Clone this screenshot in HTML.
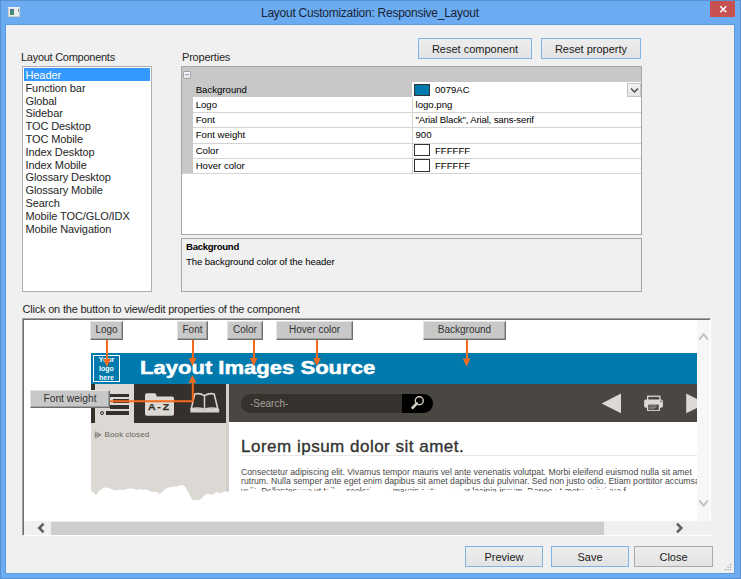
<!DOCTYPE html>
<html><head><meta charset="utf-8">
<style>
*{box-sizing:border-box;margin:0;padding:0}
html,body{width:741px;height:579px;overflow:hidden;background:#6aabf2}
body{position:relative;font-family:"Liberation Sans",sans-serif;color:#000}
.a{position:absolute}
.t{position:absolute;white-space:nowrap;line-height:1}
#frame{left:0;top:0;width:741px;height:579px;border:1px solid #5a8fd0;background:#6aabf2}
#content{left:5px;top:24px;width:730px;height:550px;background:#f0f0f0;border:1px solid #5c9ae0}
.btn{position:absolute;border:1px solid #7eb4ea;background:linear-gradient(#ededed,#e3e3e3);font-size:11px;line-height:19px;padding-top:1px;text-align:center;color:#1a1a1a}
.btn.g{border-color:#acacac}
.list .t{font-size:11px;color:#262626;letter-spacing:-0.1px}
.pg{font-size:9.6px;color:#000}
.pbtn{position:absolute;background:#c8c8c8;border:1px solid;border-color:#e4e4e4 #6e6e6e #6e6e6e #e4e4e4;font-size:10px;line-height:16px;text-align:center;color:#333;box-shadow:inset -1px -1px 0 #a0a0a0}
.or{position:absolute;background:#f36a1c}
</style></head><body>
<div id="frame" class="a"></div>
<!-- title icon -->
<div class="a" style="left:8px;top:7px;width:12px;height:10px;background:#ececec;border:1px solid #d0ccc6;border-top:1.5px solid #f4f4f4"></div>
<div class="a" style="left:9.7px;top:9px;width:4.3px;height:5.8px;background:linear-gradient(160deg,#4d6ea6,#3f9a5c)"></div><div class="a" style="left:17.5px;top:9px;width:1.5px;height:3px;background:linear-gradient(#5b86c0,#6ac070)"></div>
<div class="t" style="left:261px;top:6.5px;font-size:12px;letter-spacing:-0.25px;color:#1b2433">Layout Customization: Responsive_Layout</div>
<!-- close -->
<div class="a" style="left:710px;top:1px;width:25px;height:16px;background:#c75050"></div>
<svg class="a" style="left:718px;top:4px" width="10" height="10" viewBox="0 0 10 10"><path d="M2.2 2.2L8.3 8.2M8.3 2.2L2.2 8.2" stroke="#fff" stroke-width="1.5"/></svg>

<div id="content" class="a"></div>

<div class="t" style="left:21px;top:51.8px;font-size:11px;letter-spacing:-0.27px;color:#262626">Layout Components</div>
<div class="t" style="left:182px;top:51.8px;font-size:11px;letter-spacing:-0.2px;color:#262626">Properties</div>

<div class="btn" style="left:418px;top:38px;width:114px;height:21px">Reset component</div>
<div class="btn" style="left:541px;top:38px;width:100px;height:21px">Reset property</div>

<!-- listbox -->
<div class="a list" style="left:22px;top:66px;width:130px;height:226px;background:#fff;border:1px solid #abadb3">
 <div class="a" style="left:1px;top:1px;width:126px;height:13px;background:#3399ff"></div>
</div>
<div class="list">
<div class="t" style="left:25.5px;top:69.9px;color:#fff">Header</div>
<div class="t" style="left:25.5px;top:82.7px">Function bar</div>
<div class="t" style="left:25.5px;top:95.5px">Global</div>
<div class="t" style="left:25.5px;top:108.3px">Sidebar</div>
<div class="t" style="left:25.5px;top:121.1px">TOC Desktop</div>
<div class="t" style="left:25.5px;top:133.9px">TOC Mobile</div>
<div class="t" style="left:25.5px;top:146.7px">Index Desktop</div>
<div class="t" style="left:25.5px;top:159.5px">Index Mobile</div>
<div class="t" style="left:25.5px;top:172.3px">Glossary Desktop</div>
<div class="t" style="left:25.5px;top:185.1px">Glossary Mobile</div>
<div class="t" style="left:25.5px;top:197.9px">Search</div>
<div class="t" style="left:25.5px;top:210.7px">Mobile TOC/GLO/IDX</div>
<div class="t" style="left:25.5px;top:223.5px">Mobile Navigation</div>
</div>

<!-- property grid -->
<div class="a" style="left:181px;top:66px;width:461px;height:169px;background:#fff;border:1px solid #a4a8ac;border-top:1.5px solid #a4a8ac"></div>
<div class="a" style="left:182px;top:67px;width:459px;height:15px;background:#c8c8c8"></div>
<div class="a" style="left:182px;top:82px;width:11px;height:91.5px;background:#c8c8c8"></div>
<div class="a" style="left:193px;top:82px;width:219px;height:15px;background:#c8c8c8"></div>
<div class="a" style="left:183px;top:71px;width:8px;height:8px;border:1px solid #a0a0a0;background:linear-gradient(#fafafa,#e4e4e4);border-radius:1.5px"></div>
<div class="a" style="left:184.8px;top:74px;width:4.4px;height:1.2px;background:#8797d0"></div>
<!-- row lines -->
<div class="a" style="left:193px;top:112px;width:448px;height:1px;background:#d4d4d4"></div>
<div class="a" style="left:193px;top:127px;width:448px;height:1px;background:#d4d4d4"></div>
<div class="a" style="left:193px;top:142.5px;width:448px;height:1px;background:#d4d4d4"></div>
<div class="a" style="left:193px;top:157.7px;width:448px;height:1px;background:#d4d4d4"></div>
<div class="a" style="left:182px;top:173px;width:459px;height:1px;background:#d4d4d4"></div>
<div class="a" style="left:412px;top:97px;width:1px;height:76px;background:#d4d4d4"></div>
<!-- dropdown -->
<div class="a" style="left:627px;top:82.5px;width:14px;height:14.5px;border:1px solid #c4c4c4;background:linear-gradient(#f2f2f2,#e4e4e4)"></div>
<svg class="a" style="left:629.5px;top:86.5px" width="9" height="7" viewBox="0 0 9 7"><path d="M1 1.5L4.5 5L8 1.5" stroke="#444" stroke-width="1.3" fill="none"/></svg>
<div class="a" style="left:414px;top:84px;width:16px;height:12px;background:#0079ac;border:1px solid #333"></div>
<div class="a" style="left:414px;top:144px;width:16px;height:12px;background:#fff;border:1px solid #333"></div>
<div class="a" style="left:414px;top:159px;width:16px;height:13px;background:#fff;border:1px solid #333"></div>
<div class="pg">
<div class="t" style="left:195.7px;top:84.8px">Background</div>
<div class="t" style="left:195.7px;top:99.8px">Logo</div>
<div class="t" style="left:195.7px;top:114.8px">Font</div>
<div class="t" style="left:195.7px;top:130.3px">Font weight</div>
<div class="t" style="left:195.7px;top:145.5px">Color</div>
<div class="t" style="left:195.7px;top:160.7px">Hover color</div>
<div class="t" style="left:435px;top:84.8px">0079AC</div>
<div class="t" style="left:415.5px;top:99.8px">logo.png</div>
<div class="t" style="left:415.5px;top:114.8px;letter-spacing:-0.15px">"Arial Black", Arial, sans-serif</div>
<div class="t" style="left:415.5px;top:130.3px">900</div>
<div class="t" style="left:435px;top:145.5px">FFFFFF</div>
<div class="t" style="left:435px;top:160.7px">FFFFFF</div>
</div>
<!-- description -->
<div class="a" style="left:181px;top:238px;width:461px;height:54px;border:1px solid #a4a8ac;border-top:1.5px solid #a4a8ac;background:#f0f0f0"></div>
<div class="t pg" style="left:186px;top:242px;font-weight:bold;letter-spacing:-0.3px">Background</div>
<div class="t pg" style="left:186px;top:256.8px;letter-spacing:-0.1px">The background color of the header</div>

<div class="t" style="left:22.5px;top:303.5px;font-size:11px;letter-spacing:-0.2px;color:#262626">Click on the button to view/edit properties of the component</div>

<!-- preview panel -->
<div class="a" style="left:22px;top:318px;width:689px;height:218px;background:#fff;border-style:solid;border-width:1px;border-color:#a0a0a0 #fff #fff #a0a0a0;box-shadow:inset 1px 1px 0 #6d6d6d"></div>

<!-- preview content -->
<div class="a" style="left:0;top:0;width:741px;height:579px;clip-path:inset(320px 44px 58px 24px)">
 <div class="a" style="left:91px;top:353px;width:606px;height:31px;background:#0079ac"></div>
 <!-- toolbar -->
 <div class="a" style="left:91px;top:384px;width:4px;height:38.5px;background:#34312d"></div>
 <div class="a" style="left:95px;top:384px;width:134px;height:116px;background:#dcd8d3"></div>
 <div class="a" style="left:133.6px;top:384px;width:92px;height:38.5px;background:#34312d"></div>
 <div class="a" style="left:225.6px;top:384px;width:3.4px;height:116px;background:#d3cec9"></div>
 <div class="a" style="left:229px;top:384px;width:468px;height:38px;background:#4a4641"></div>
 <div class="a" style="left:91px;top:422.5px;width:4px;height:78px;background:#dcd8d3"></div>

 <!-- logo box -->
 <div class="a" style="left:93px;top:355px;width:27px;height:27px;border:1px solid #fff"></div>
 <div class="a" style="left:93px;top:355px;width:27px;text-align:center;color:#fff;font-weight:bold;font-size:7px;line-height:9px;padding-top:0px">Your<br>logo<br>here</div>
 <div class="t" style="left:140px;top:358px;font-size:19px;font-weight:bold;color:#fff;transform:scaleX(1.16);transform-origin:0 0;-webkit-text-stroke:0.5px #fff">Layout Images Source</div>
 <!-- hamburger icon -->
 <div class="a" style="left:110px;top:393.7px;width:18.6px;height:3.4px;background:#34312d"></div>
 <div class="a" style="left:113px;top:399.2px;width:15.6px;height:3.4px;background:#34312d"></div>
 <div class="a" style="left:110px;top:405.4px;width:18.6px;height:3.4px;background:#34312d"></div>
 <div class="a" style="left:106.4px;top:411px;width:22.2px;height:3.6px;background:#34312d"></div>
 <div class="a" style="left:99.6px;top:411px;width:4px;height:4px;border:1.2px solid #34312d;border-radius:50%"></div>
 <!-- A-Z folder -->
 <svg class="a" style="left:144px;top:392px" width="31" height="25" viewBox="0 0 31 25">
  <path d="M1 3.5Q1 1.3 3 1.3H10.5Q12 1.3 12.5 3V4.4H28Q30 4.4 30 6.4V22Q30 23.8 28 23.8H3Q1 23.8 1 22Z" fill="#dcd8d3"/>
 </svg>
 <div class="t" style="left:148.3px;top:402.3px;font-size:9.4px;font-weight:bold;color:#34312d;letter-spacing:1.6px;transform:scaleX(1.12);transform-origin:0 0;-webkit-text-stroke:0.25px #34312d">A-Z</div>
 <!-- book -->
 <svg class="a" style="left:189px;top:392px" width="32" height="22" viewBox="0 0 32 22">
  <path d="M15.5 3.6Q10.5 0.6 5.8 2.1L2.2 16.8Q9 15 15.5 17.3Q22 15 28.8 16.8L25.2 2.1Q20.5 0.6 15.5 3.6Z" fill="none" stroke="#d6d1cc" stroke-width="1.6"/>
  <path d="M15.5 3.6V17" stroke="#d6d1cc" stroke-width="1.5"/>
  <path d="M1.4 17Q9 15.6 15.5 17.8Q22 15.6 30.2 17V20.4H1.4Z" fill="#d6d1cc"/>
 </svg>
 <!-- search -->
 <div class="a" style="left:241px;top:393.6px;width:191.5px;height:19.4px;background:#35322e;border-radius:9.7px;overflow:hidden">
  <div class="a" style="left:161px;top:0;width:31px;height:20px;background:#000"></div>
 </div>
 <div class="t" style="left:250px;top:398.5px;font-size:10px;color:#a8a39e">-Search-</div>
 <svg class="a" style="left:408px;top:394px" width="20" height="18" viewBox="0 0 20 18">
  <circle cx="11.3" cy="6.8" r="4" fill="none" stroke="#d0cac4" stroke-width="1.4"/>
  <path d="M8.6 9.6L4.6 13.8" stroke="#d0cac4" stroke-width="2.8" stroke-linecap="round"/>
 </svg>
 <!-- nav -->
 <svg class="a" style="left:600px;top:392px" width="100" height="24" viewBox="0 0 100 24">
  <path d="M1.6 11.6L21 1.6V21.2Z" fill="#dcd8d3"/>
  <path d="M86.2 1.6L106 11.6L86.2 21.2Z" fill="#dcd8d3"/>
  <rect x="47.65" y="4.25" width="12.2" height="5" fill="none" stroke="#dcd8d3" stroke-width="1.3"/>
  <rect x="44.1" y="7.6" width="18.8" height="8.1" rx="1.6" fill="#dcd8d3"/>
  <circle cx="61" cy="9.4" r="0.8" fill="#6a6560"/>
  <rect x="47" y="11.9" width="13" height="7" fill="#dcd8d3"/>
  <rect x="48.3" y="12.6" width="10.4" height="5.4" fill="#4a4641"/>
  <rect x="49.5" y="13.4" width="7" height="0.9" fill="#9a958f"/><rect x="49.5" y="14.9" width="7" height="0.9" fill="#9a958f"/><rect x="49.5" y="16.4" width="5" height="0.9" fill="#9a958f"/>
 </svg>
 <!-- book closed -->
 <svg class="a" style="left:94px;top:430px" width="9" height="10" viewBox="0 0 9 10">
  <path d="M0.8 0.8L7.8 4.9L0.8 9Z" fill="#8a8580"/><path d="M0.8 0.8L4 4.9L0.8 9" fill="none" stroke="#dcd8d3" stroke-width="0.8"/>
 </svg>
 <div class="t" style="left:104.6px;top:430.8px;font-size:8.1px;color:#68635e;letter-spacing:0.05px">Book closed</div>
 <!-- content -->
 <div class="t" style="left:241px;top:437.5px;font-size:17px;color:#333;letter-spacing:0.5px;-webkit-text-stroke:0.35px #333">Lorem ipsum dolor sit amet.</div>
 <div class="a" style="left:241px;top:455px;width:456px;height:1px;background:#e6e6e6"></div>
 <div class="a" style="left:241px;top:467.5px;width:460px;font-size:8.7px;line-height:9.5px;color:#4a4a4a;white-space:nowrap">Consectetur adipiscing elit. Vivamus tempor mauris vel ante venenatis volutpat. Morbi eleifend euismod nulla sit amet<br>rutrum. Nulla semper ante eget enim dapibus sit amet dapibus dui pulvinar. Sed non justo odio. Etiam porttitor accumsan<br>velit. Pellentesque ut tellus scelerisque mauris ante, tempor lacinia ipsum. Donec ut metus tristique f</div>
 <!-- torn edge -->
 <svg class="a" style="left:88px;top:480px" width="612" height="45" viewBox="88 480 612 45">
  <path d="M88.0 490.2 L91.0 490.2 L93.5 492.4 L96.0 495.3 L100.0 490.0 L104.2 487.8 L107.1 487.4 L110.0 488.5 L113.0 489.8 L116.0 490.5 L119.2 489.4 L122.4 490.2 L125.2 489.5 L128.0 488.7 L131.5 488.6 L134.8 489.0 L138.0 490.0 L140.2 489.0 L142.5 489.9 L144.7 489.8 L147.1 489.5 L149.6 491.1 L152.0 492.0 L154.6 491.7 L157.3 492.4 L159.9 493.9 L164.0 490.0 L168.0 487.8 L171.0 487.0 L174.0 486.5 L177.1 486.6 L180.1 485.2 L182.6 485.0 L185.0 486.5 L187.2 490.2 L189.8 494.7 L192.3 500.4 L195.0 500.3 L197.6 500.7 L200.3 499.4 L202.9 497.0 L205.4 494.3 L207.7 493.9 L210.0 494.0 L212.2 494.7 L214.5 493.3 L217.0 492.0 L219.5 493.6 L222.0 492.5 L224.2 491.8 L226.5 491.3 L228.7 491.9 L231.1 491.1 L233.6 491.5 L236.0 492.0 L239.0 491.9 L242.0 490.5 L246.0 491.0 L249.0 489.0 L252.0 488.5 L255.0 488.9 L258.0 489.0 L260.5 490.6 L263.0 491.5 L265.4 491.1 L267.8 491.4 L270.2 490.2 L272.6 490.1 L275.0 491.0 L277.5 490.1 L280.0 490.9 L282.5 490.1 L285.0 490.0 L287.3 490.1 L289.7 491.2 L292.0 491.5 L294.7 490.6 L297.3 489.4 L300.0 489.0 L302.7 489.8 L305.3 489.8 L308.0 489.5 L312.0 491.5 L314.5 490.7 L317.0 491.2 L319.5 490.8 L322.0 490.5 L324.7 490.7 L327.3 489.7 L330.0 488.5 L332.5 487.9 L335.0 489.3 L337.5 487.3 L340.0 488.0 L343.0 489.1 L346.0 490.5 L348.2 491.3 L350.5 490.2 L352.8 491.2 L355.0 491.5 L357.2 490.2 L359.4 491.3 L361.6 491.2 L363.8 490.5 L366.0 490.0 L368.7 489.8 L371.3 487.6 L374.0 487.0 L377.0 486.4 L380.0 485.0 L383.0 485.7 L386.0 486.0 L390.0 490.0 L392.5 490.4 L395.0 490.4 L397.5 491.5 L400.0 491.0 L402.5 491.9 L405.0 490.8 L407.5 491.1 L410.0 489.7 L412.5 491.0 L415.0 490.5 L417.5 490.4 L420.0 490.8 L422.5 490.1 L425.0 489.0 L427.3 488.9 L429.7 489.4 L432.0 490.0 L434.7 489.7 L437.3 487.6 L440.0 488.0 L442.4 488.0 L444.8 487.5 L447.2 487.5 L449.6 487.4 L452.0 488.5 L454.5 489.2 L457.0 487.9 L459.5 488.3 L462.0 489.0 L464.7 489.4 L467.3 491.2 L470.0 491.0 L472.5 490.0 L475.0 490.6 L477.5 490.7 L480.0 490.5 L482.5 491.5 L485.0 491.5 L487.5 491.8 L490.0 490.7 L492.5 491.1 L495.0 491.5 L497.5 490.9 L500.0 491.8 L502.5 491.8 L505.0 489.7 L507.5 489.5 L510.0 490.0 L512.5 489.7 L515.0 489.9 L517.5 490.7 L520.0 491.0 L522.5 491.0 L525.0 490.1 L527.5 489.4 L530.0 490.2 L532.5 489.9 L535.0 490.0 L537.6 490.4 L540.2 491.6 L542.8 491.3 L545.4 491.2 L548.0 491.5 L550.7 491.1 L553.3 490.6 L556.0 489.5 L558.5 488.6 L561.0 490.6 L563.5 490.5 L566.0 490.0 L568.4 491.0 L570.8 491.1 L573.2 490.4 L575.6 490.6 L578.0 491.0 L580.4 489.7 L582.8 490.5 L585.2 488.8 L587.6 488.4 L590.0 489.0 L592.7 488.7 L595.3 488.9 L598.0 490.0 L601.0 488.9 L604.0 488.5 L606.7 488.3 L609.3 489.1 L612.0 491.0 L614.6 490.3 L617.2 490.3 L619.8 491.0 L622.4 490.4 L625.0 491.5 L627.5 492.1 L630.0 491.3 L632.5 490.0 L635.0 490.0 L637.5 489.9 L640.0 490.0 L642.7 489.2 L645.3 488.2 L648.0 488.5 L650.3 489.6 L652.7 490.3 L655.0 489.5 L657.2 489.7 L659.5 490.0 L661.8 489.3 L664.0 490.5 L666.7 489.1 L669.3 489.2 L672.0 489.0 L674.7 488.1 L677.3 489.1 L680.0 488.0 L682.5 487.8 L685.0 488.0 L687.5 490.5 L690.0 490.0 L692.5 490.3 L695.0 489.7 L697.5 490.8 L700.0 491.0 V525 H88Z" fill="#fff"/>
 </svg>
</div>
<!-- scrollbars -->
<div class="a" style="left:696.5px;top:320px;width:13.5px;height:201px;background:#f7f7f7"></div>
<svg class="a" style="left:697px;top:330px" width="14" height="14" viewBox="0 0 14 14"><path d="M2.3 9.6L6.6 4.2L10.9 9.6" fill="none" stroke="#c4c4c4" stroke-width="2"/></svg>
<svg class="a" style="left:697px;top:496px" width="14" height="14" viewBox="0 0 14 14"><path d="M2.3 4.3L6.6 9.7L10.9 4.3" fill="none" stroke="#c4c4c4" stroke-width="2"/></svg>
<div class="a" style="left:24px;top:521px;width:687px;height:14px;background:#f0f0f0"></div>
<div class="a" style="left:51px;top:521.5px;width:553px;height:13px;background:#cdcdcd"></div>
<svg class="a" style="left:34px;top:521px" width="14" height="14" viewBox="0 0 14 14"><path d="M9.6 2.6L5.3 7L9.6 11.4" fill="none" stroke="#606060" stroke-width="2.6"/></svg>
<svg class="a" style="left:672px;top:521px" width="14" height="14" viewBox="0 0 14 14"><path d="M5 2.6L9.3 7L5 11.4" fill="none" stroke="#606060" stroke-width="2.6"/></svg>
<!-- preview buttons -->
<div class="pbtn" style="left:90px;top:321px;width:33px;height:19px">Logo</div>
<div class="pbtn" style="left:177px;top:321px;width:31px;height:19px">Font</div>
<div class="pbtn" style="left:227px;top:321px;width:36px;height:19px">Color</div>
<div class="pbtn" style="left:276px;top:321px;width:77px;height:19px">Hover color</div>
<div class="pbtn" style="left:423px;top:321px;width:83px;height:19px">Background</div>
<!-- arrows -->
<div class="or" style="left:106px;top:340px;width:2px;height:20px"></div>
<div class="or" style="left:191.5px;top:340px;width:2px;height:20px"></div>
<div class="or" style="left:252.7px;top:340px;width:2px;height:20px"></div>
<div class="or" style="left:316px;top:340px;width:2px;height:20px"></div>
<div class="or" style="left:465.6px;top:340px;width:2px;height:20px"></div>
<svg class="a" style="left:0;top:0" width="741" height="579">
 <g fill="#f36a1c">
  <path d="M103.2 359L110.8 359L107 367Z"/>
  <path d="M188.7 358L196.3 358L192.5 366Z"/>
  <path d="M249.9 358L257.5 358L253.7 366Z"/>
  <path d="M313.2 358L320.8 358L317 366Z"/>
  <path d="M462.8 358.5L470.4 358.5L466.6 366.5Z"/>
  <path d="M188.7 383L196.3 383L192.5 375Z"/>
 </g>
 <path d="M110 401.3H192.8V382" fill="none" stroke="#f36a1c" stroke-width="2"/>
</svg>
<div class="pbtn" style="left:30px;top:389.8px;width:80px;height:18.6px;font-size:10.3px">Font weight</div>
<!-- size grip -->
<svg class="a" style="left:724px;top:563px" width="10" height="10" viewBox="0 0 10 10"><g fill="#9a9a9a"><rect x="6" y="1" width="1.2" height="1.2"/><rect x="3.5" y="3.5" width="1.2" height="1.2"/><rect x="6" y="3.5" width="1.2" height="1.2"/><rect x="1" y="6" width="1.2" height="1.2"/><rect x="3.5" y="6" width="1.2" height="1.2"/><rect x="6" y="6" width="1.2" height="1.2"/></g></svg>
<!-- bottom buttons -->
<div class="btn" style="left:465px;top:546px;width:78px;height:21px">Preview</div>
<div class="btn" style="left:551px;top:546px;width:78px;height:21px">Save</div>
<div class="btn g" style="left:634px;top:546px;width:79px;height:21px">Close</div>
</body></html>
